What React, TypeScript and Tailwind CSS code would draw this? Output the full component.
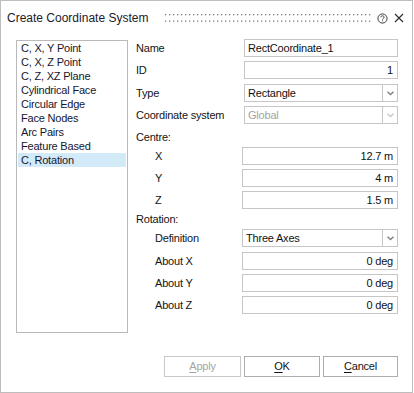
import React from "react";

const items = [
  "C, X, Y Point",
  "C, X, Z Point",
  "C, Z, XZ Plane",
  "Cylindrical Face",
  "Circular Edge",
  "Face Nodes",
  "Arc Pairs",
  "Feature Based",
  "C, Rotation",
];

function Chevron({ disabled }: { disabled?: boolean }) {
  return (
    <svg width="7" height="5" viewBox="0 0 7 5">
      <path d="M0.5 0.8 L3.5 3.6 L6.5 0.8" fill="none" stroke={disabled ? "#c8c8c8" : "#808080"} strokeWidth="1.4" />
    </svg>
  );
}

function TextBox({ value, right, wide }: { value: string; right?: boolean; wide?: boolean }) {
  return (
    <div
      className={`h-[18px] ${wide ? "w-[156px]" : "w-[154px]"} border border-[#c6c6c6] bg-white flex items-center ${
        right ? "justify-end pr-[4px]" : "pl-[3px]"
      } text-[#111] leading-none`}
    >
      {value}
    </div>
  );
}

function Select({ value, disabled, wide }: { value: string; disabled?: boolean; wide?: boolean }) {
  return (
    <div className={`h-[18px] ${wide ? "w-[156px]" : "w-[154px]"} border border-[#c6c6c6] bg-white flex`}>
      <div className={`flex-1 flex items-center pl-[3px] leading-none ${disabled ? "text-[#a2a2a2]" : "text-[#111]"}`}>{value}</div>
      <div className="w-[15px] border-l border-[#c6c6c6] flex items-center justify-center">
        <Chevron disabled={disabled} />
      </div>
    </div>
  );
}

function Row({ label, children, sub, className = "" }: { label: string; children: React.ReactNode; sub?: boolean; className?: string }) {
  return (
    <div className={`flex items-center h-[18px] ${className}`}>
      <div className={sub ? "pl-[19px] w-[106px]" : "w-[108px]"}>{label}</div>
      {children}
    </div>
  );
}

function Dots() {
  const xs: number[] = [];
  for (let x = 0; x <= 204; x += 4) xs.push(x);
  return (
    <svg width="206" height="9" viewBox="0 0 206 9">
      {xs.map((x) => (
        <g key={x}>
          <rect x={x} y={0} width="1.3" height="1.3" fill="#7d7d7d" />
          <rect x={x} y={6.5} width="1.3" height="1.3" fill="#7d7d7d" />
        </g>
      ))}
    </svg>
  );
}

export default function App() {
  return (
    <div
      className="w-[413px] h-[393px] border border-[#bdbdbd] bg-white flex flex-col text-[11px] tracking-[-0.2px] text-[#141414]"
      style={{ fontFamily: '"Liberation Sans", Arial, sans-serif' }}
    >
      {/* Title bar */}
      <div className="h-[34px] flex items-center pl-[6px] pr-[8px]">
        <div className="text-[12px] tracking-normal text-[#1b1b2b] w-[158px]">Create Coordinate System</div>
        <div className="flex-1 flex items-center">
          <Dots />
        </div>
        <div className="flex items-center gap-[6px]">
          <svg width="11" height="11" viewBox="0 0 11 11">
            <circle cx="5.5" cy="5.5" r="4.6" fill="none" stroke="#3a3a3a" strokeWidth="1" />
            <path d="M3.9 4.3 C3.9 3.3 4.6 2.8 5.5 2.8 C6.4 2.8 7.1 3.4 7.1 4.2 C7.1 5.2 5.6 5.3 5.6 6.5" fill="none" stroke="#3a3a3a" strokeWidth="1" />
            <rect x="5.1" y="7.4" width="1" height="1" fill="#3a3a3a" />
          </svg>
          <svg width="10" height="10" viewBox="0 0 10 10">
            <path d="M1 1 L9 9 M9 1 L1 9" stroke="#2a2a2a" strokeWidth="1.1" />
          </svg>
        </div>
      </div>

      {/* Body */}
      <div className="flex pl-[15px] pt-[4px]">
        <div className="mt-[1px] w-[112px] h-[293px] border border-[#b9b9b9] p-[1px]">
          <div className="-mt-[1px]">
            {items.map((it, i) => (
              <div
                key={it}
                className={`h-[14px] leading-[14px] pl-[3px] text-[#161630] ${i === items.length - 1 ? "bg-[#d3ebf8]" : ""}`}
              >
                {it}
              </div>
            ))}
          </div>
        </div>

        <div className="ml-[8px] w-[262px] flex flex-col">
          <Row label="Name">
            <TextBox value="RectCoordinate_1" />
          </Row>
          <Row label="ID" className="mt-[4px]">
            <TextBox value="1" right />
          </Row>
          <Row label="Type" className="mt-[5px]">
            <Select value="Rectangle" />
          </Row>
          <Row label="Coordinate system" className="mt-[4px]">
            <Select value="Global" disabled />
          </Row>
          <div className="h-[23px] pt-[7px] leading-[13px]">Centre:</div>
          <Row label="X" sub>
            <TextBox value="12.7 m" right wide />
          </Row>
          <Row label="Y" sub className="mt-[4px]">
            <TextBox value="4 m" right wide />
          </Row>
          <Row label="Z" sub className="mt-[4px]">
            <TextBox value="1.5 m" right wide />
          </Row>
          <div className="h-[20px] pt-[4px] leading-[13px]">Rotation:</div>
          <Row label="Definition" sub>
            <Select value="Three Axes" wide />
          </Row>
          <Row label="About X" sub className="mt-[5px]">
            <TextBox value="0 deg" right wide />
          </Row>
          <Row label="About Y" sub className="mt-[4px]">
            <TextBox value="0 deg" right wide />
          </Row>
          <Row label="About Z" sub className="mt-[4px]">
            <TextBox value="0 deg" right wide />
          </Row>
        </div>
      </div>

      {/* Footer */}
      <div className="mt-[23px] flex justify-end pr-[14px] gap-[3px]">
        <button className="w-[77px] h-[21px] border border-[#c8c8c8] bg-white text-[#a4a4a4] leading-none">
          <span className="underline underline-offset-[2px]">A</span>pply
        </button>
        <button className="w-[76px] h-[21px] border border-[#adadad] bg-white text-[#141414] leading-none">
          <span className="underline underline-offset-[2px]">O</span>K
        </button>
        <button className="w-[75px] h-[21px] border border-[#adadad] bg-white text-[#141414] leading-none">
          <span className="underline underline-offset-[2px]">C</span>ancel
        </button>
      </div>
    </div>
  );
}
